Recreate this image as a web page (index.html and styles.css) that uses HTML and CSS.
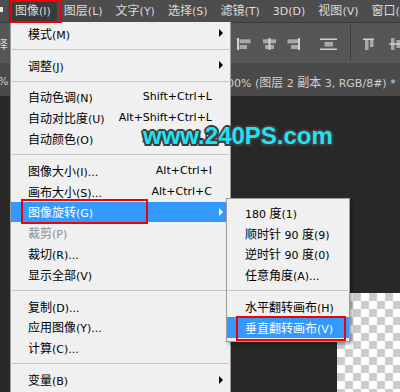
FILE: index.html
```html
<!DOCTYPE html>
<html lang="zh-CN">
<head>
    <meta charset="UTF-8">
    <meta name="viewport" content="width=device-width, initial-scale=1.0">
    <title>图像旋转</title>
    <link rel="stylesheet" href="styles.css">
</head>
<body>
    <div class="ps">
        <div class="menubar">
            <span class="logo-tail"></span>
            <span class="mb-item active">图像<span class="en">(I)</span></span>
            <span class="mb-item">图层<span class="en">(L)</span></span>
            <span class="mb-item">文字<span class="en">(Y)</span></span>
            <span class="mb-item">选择<span class="en">(S)</span></span>
            <span class="mb-item">滤镜<span class="en">(T)</span></span>
            <span class="mb-item"><span class="en">3D(D)</span></span>
            <span class="mb-item">视图<span class="en">(V)</span></span>
            <span class="mb-item">窗口<span class="en">(W)</span></span>
        </div>

        <div class="options">
            <span class="opt-label">选择</span>
            <svg class="align-tools" width="170" height="40" viewBox="0 0 170 40">
                <!-- align left / center / right -->
                <rect class="ln" x="7" y="15" width="2" height="12"/>
                <rect class="bar" x="9.5" y="16.3" width="11" height="4"/>
                <rect class="bar" x="9.5" y="22" width="7.5" height="4"/>

                <rect class="bar" x="33" y="16.3" width="13" height="4"/>
                <rect class="bar" x="35" y="22" width="9" height="4"/>
                <rect class="ln" x="38.5" y="15" width="2" height="12"/>

                <rect class="ln" x="68" y="15" width="2" height="12"/>
                <rect class="bar" x="57.5" y="16.3" width="10.5" height="4"/>
                <rect class="bar" x="61" y="22" width="7" height="4"/>

                <!-- distribute -->
                <rect class="ln" x="90" y="15.5" width="17" height="1.5"/>
                <rect class="bar" x="94.5" y="19" width="8.5" height="4.5"/>
                <rect class="ln" x="90" y="25.5" width="17" height="1.5"/>

                <rect class="divider" x="120" y="2" width="1" height="36"/>

                <!-- align top -->
                <rect class="ln" x="133" y="15.5" width="11" height="1.5"/>
                <rect class="bar" x="135" y="17" width="3.5" height="10"/>
                <rect class="bar" x="140" y="17" width="3.5" height="7"/>

                <!-- align middle -->
                <rect class="bar" x="161" y="15" width="3.5" height="12"/>
                <rect class="bar" x="166.5" y="17" width="3.5" height="8"/>
                <rect class="ln" x="159" y="20.3" width="11" height="1.5"/>
            </svg>
        </div>

        <div class="tabs">
            <span class="tab-prev en">%</span>
            <span class="tab-title"><span class="en">@ 100% (</span>图层<span class="en"> 2 </span>副本<span class="en"> 3, RGB/8#) *</span></span>
        </div>

        <div class="workspace">
            <div class="canvas"></div>
        </div>

        <ul class="menu main-menu">
            <li class="has-sub"><span>模式<span class="en">(M)</span></span></li>
            <li class="sep"></li>
            <li class="has-sub"><span>调整<span class="en">(J)</span></span></li>
            <li class="sep"></li>
            <li><span>自动色调<span class="en">(N)</span></span><span class="key">Shift+Ctrl+L</span></li>
            <li><span>自动对比度<span class="en">(U)</span></span><span class="key">Alt+Shift+Ctrl+L</span></li>
            <li><span>自动颜色<span class="en">(O)</span></span><span class="key">Shift+Ctrl+B</span></li>
            <li class="sep"></li>
            <li><span>图像大小<span class="en">(I)...</span></span><span class="key">Alt+Ctrl+I</span></li>
            <li><span>画布大小<span class="en">(S)...</span></span><span class="key">Alt+Ctrl+C</span></li>
            <li class="has-sub active"><span>图像旋转<span class="en">(G)</span></span></li>
            <li class="off"><span>裁剪<span class="en">(P)</span></span></li>
            <li><span>裁切<span class="en">(R)...</span></span></li>
            <li><span>显示全部<span class="en">(V)</span></span></li>
            <li class="sep"></li>
            <li><span>复制<span class="en">(D)...</span></span></li>
            <li><span>应用图像<span class="en">(Y)...</span></span></li>
            <li><span>计算<span class="en">(C)...</span></span></li>
            <li class="sep"></li>
            <li class="has-sub"><span>变量<span class="en">(B)</span></span></li>
        </ul>

        <ul class="menu sub-menu">
            <li><span><span class="en">180 </span>度<span class="en">(1)</span></span></li>
            <li><span>顺时针<span class="en"> 90 </span>度<span class="en">(9)</span></span></li>
            <li><span>逆时针<span class="en"> 90 </span>度<span class="en">(0)</span></span></li>
            <li><span>任意角度<span class="en">(A)...</span></span></li>
            <li class="sep"></li>
            <li><span>水平翻转画布<span class="en">(H)</span></span></li>
            <li class="active"><span>垂直翻转画布<span class="en">(V)</span></span></li>
        </ul>

        <div class="watermark">www.240PS.com</div>

        <div class="mark mark-menu"></div>
        <div class="mark mark-rotate"></div>
        <div class="mark mark-flip"></div>
    </div>
</body>
</html>
```

FILE: styles.css
```css
* {
    margin: 0;
    padding: 0;
    box-sizing: border-box;
}

body {
    background-color: #282828;
    font-family: "Noto Sans CJK SC", sans-serif;
    font-size: 12px;
}

.ps {
    position: relative;
    width: 400px;
    height: 392px;
    overflow: hidden;
    display: flex;
    flex-direction: column;
}

.en,
.key {
    font-family: "DejaVu Sans", sans-serif;
    font-size: 11px;
}

/* top menu bar */
.menubar {
    height: 23px;
    flex-shrink: 0;
    display: flex;
    align-items: center;
    background-color: #4d4d4d;
    border-bottom: 1px solid #3c3c3c;
    color: #dcdcdc;
    white-space: nowrap;
}

.logo-tail {
    flex-shrink: 0;
    width: 3px;
    height: 5px;
    margin-right: 5.5px;
    margin-top: -3px;
    background-color: #e6e6e6;
}

.mb-item {
    flex-shrink: 0;
    padding: 0 6.5px;
    line-height: 22px;
}

.mb-item.active {
    background-color: #3a3a3a;
}

/* options bar */
.options {
    height: 40px;
    flex-shrink: 0;
    display: flex;
    align-items: center;
    background-color: #565656;
    color: #d8d8d8;
    white-space: nowrap;
}

.opt-label {
    flex-shrink: 0;
    margin-left: -16px;
}

.align-tools {
    flex-shrink: 0;
    margin-left: 222px;
}

.align-tools .ln {
    fill: #d0d0d0;
}

.align-tools .bar {
    fill: #a9a9a9;
}

.align-tools .divider {
    fill: #3e3e3e;
}

/* document tabs */
.tabs {
    height: 33px;
    flex-shrink: 0;
    display: flex;
    align-items: center;
    padding-top: 3px;
    background-color: #4a4a4a;
    color: #cfcfcf;
    white-space: nowrap;
}

.tab-prev {
    flex-shrink: 0;
    margin-left: -2px;
}

.tab-title {
    flex-shrink: 0;
    margin-left: 197px;
}

.workspace {
    flex: 1;
    display: flex;
    justify-content: flex-end;
    align-items: flex-end;
    background-color: #282828;
}

.canvas {
    width: 63px;
    height: 99px;
    background: repeating-conic-gradient(#ffffff 0 25%, #cccccc 0 50%) 0 0 / 16px 16px;
}

/* drop-down menus */
.menu {
    position: absolute;
    list-style: none;
    background-color: #f0f0f0;
    color: #000;
}

.main-menu {
    left: 10px;
    top: 22px;
    width: 221px;
    height: 380px;
    padding-top: 1px;
    border: 1px solid #9c9c9c;
    border-top: none;
}

.sub-menu {
    left: 226px;
    top: 198px;
    width: 124px;
    padding: 3px 0;
    border: 1px solid #9c9c9c;
    box-shadow: 2px 2px 3px rgba(0, 0, 0, 0.35);
}

.menu li {
    position: relative;
    height: 20.8px;
    display: flex;
    align-items: center;
    justify-content: space-between;
    white-space: nowrap;
}

.main-menu li {
    padding: 0 18px 0 17px;
}

.sub-menu li {
    padding: 0 10px 0 18px;
}

.menu li.sep {
    height: 0;
    padding: 0;
    margin: 5px 1px;
    border-top: 1px solid #c4c4c4;
}

.menu li.active {
    background-color: #3399ff;
    color: #fff;
}

.menu li.off {
    color: #8d8d8d;
}

.has-sub::after {
    content: "";
    position: absolute;
    right: 7px;
    top: 50%;
    margin-top: -4px;
    border-left: 4px solid #000;
    border-top: 4px solid transparent;
    border-bottom: 4px solid transparent;
}

.has-sub.active::after {
    border-left-color: #fff;
}

/* site watermark */
.watermark {
    position: absolute;
    left: 143px;
    top: 124px;
    font-family: "Liberation Sans", sans-serif;
    font-weight: bold;
    font-size: 24px;
    line-height: 24px;
    color: #1ee4f4;
    text-shadow:
        2px 0 0 #3d3d3d, -2px 0 0 #3d3d3d, 0 2px 0 #3d3d3d, 0 -2px 0 #3d3d3d,
        1.5px 1.5px 0 #3d3d3d, -1.5px 1.5px 0 #3d3d3d, 1.5px -1.5px 0 #3d3d3d, -1.5px -1.5px 0 #3d3d3d;
}

/* red annotation boxes */
.mark {
    position: absolute;
    border: 2px solid #f20000;
}

.mark-menu {
    left: 10px;
    top: 0;
    width: 52px;
    height: 23px;
}

.mark-rotate {
    left: 21px;
    top: 199px;
    width: 127px;
    height: 25px;
}

.mark-flip {
    left: 236px;
    top: 316px;
    width: 110px;
    height: 25px;
}
```
